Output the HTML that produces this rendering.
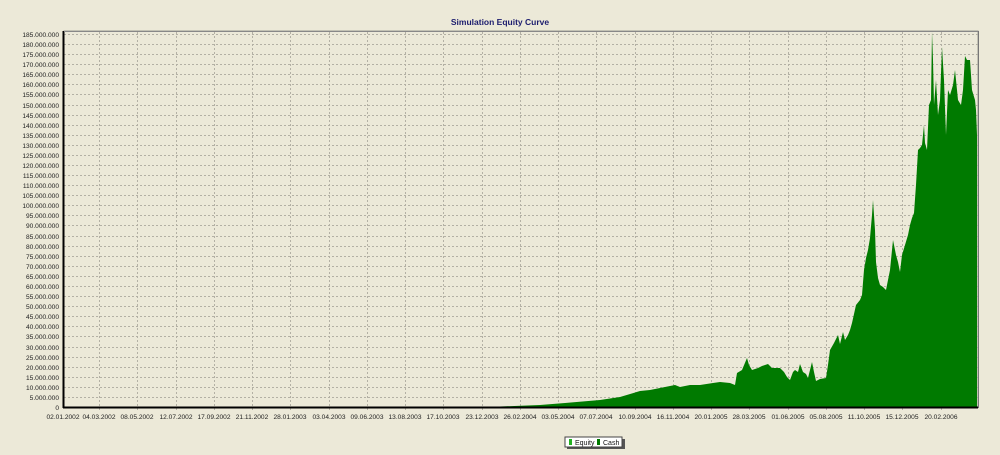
<!DOCTYPE html>
<html><head><meta charset="utf-8"><style>
html,body{margin:0;padding:0;background:#ECE9D8;width:1000px;height:455px;overflow:hidden;font-family:"Liberation Sans",Arial,sans-serif}
</style></head><body>
<svg width="1000" height="455" xmlns="http://www.w3.org/2000/svg" style="position:absolute;left:0;top:0">
<rect width="1000" height="455" fill="#ECE9D8"/>
<text x="500" y="25" text-anchor="middle" font-family="Liberation Sans, Arial, sans-serif" font-size="8.5" font-weight="bold" fill="#1c1c6e">Simulation Equity Curve</text>
<rect x="64" y="31" width="914" height="376" fill="#ECE9D8" stroke="#9a9a90" stroke-width="1"/>
<path stroke="#b3b0a4" stroke-width="1" stroke-dasharray="2,2" fill="none" d="
M64,397.5H978M64,387.5H978M64,377.5H978M64,367.5H978M64,357.5H978M64,347.5H978M64,336.5H978M64,326.5H978M64,316.5H978M64,306.5H978
M64,296.5H978M64,286.5H978M64,276.5H978M64,266.5H978M64,256.5H978M64,246.5H978M64,236.5H978M64,225.5H978M64,215.5H978M64,205.5H978
M64,195.5H978M64,185.5H978M64,175.5H978M64,165.5H978M64,155.5H978M64,145.5H978M64,135.5H978M64,125.5H978M64,115.5H978M64,105.5H978
M64,94.5H978M64,84.5H978M64,74.5H978M64,64.5H978M64,54.5H978M64,44.5H978M64,34.5H978
M99.5,32V410M137.5,32V410M176.5,32V410M214.5,32V410M252.5,32V410M290.5,32V410M329.5,32V410M367.5,32V410M405.5,32V410M443.5,32V410
M482.5,32V410M520.5,32V410M558.5,32V410M596.5,32V410M635.5,32V410M673.5,32V410M711.5,32V410M749.5,32V410M788.5,32V410M826.5,32V410
M864.5,32V410M902.5,32V410M941.5,32V410"/>
<g font-family="Liberation Sans, Arial, sans-serif" font-size="6.6" fill="#222" text-anchor="end">
<text x="59" y="410">0</text><text x="59" y="400">5.000.000</text><text x="59" y="390">10.000.000</text><text x="59" y="380">15.000.000</text><text x="59" y="370">20.000.000</text><text x="59" y="360">25.000.000</text><text x="59" y="350">30.000.000</text><text x="59" y="339">35.000.000</text><text x="59" y="329">40.000.000</text><text x="59" y="319">45.000.000</text><text x="59" y="309">50.000.000</text><text x="59" y="299">55.000.000</text><text x="59" y="289">60.000.000</text><text x="59" y="279">65.000.000</text><text x="59" y="269">70.000.000</text><text x="59" y="259">75.000.000</text><text x="59" y="249">80.000.000</text><text x="59" y="239">85.000.000</text><text x="59" y="228">90.000.000</text><text x="59" y="218">95.000.000</text><text x="59" y="208">100.000.000</text><text x="59" y="198">105.000.000</text><text x="59" y="188">110.000.000</text><text x="59" y="178">115.000.000</text><text x="59" y="168">120.000.000</text><text x="59" y="158">125.000.000</text><text x="59" y="148">130.000.000</text><text x="59" y="138">135.000.000</text><text x="59" y="128">140.000.000</text><text x="59" y="118">145.000.000</text><text x="59" y="108">150.000.000</text><text x="59" y="97">155.000.000</text><text x="59" y="87">160.000.000</text><text x="59" y="77">165.000.000</text><text x="59" y="67">170.000.000</text><text x="59" y="57">175.000.000</text><text x="59" y="47">180.000.000</text><text x="59" y="37">185.000.000</text>
</g>
<g font-family="Liberation Sans, Arial, sans-serif" font-size="6.6" fill="#222" text-anchor="middle">
<text x="63" y="419">02.01.2002</text><text x="99" y="419">04.03.2002</text><text x="137" y="419">08.05.2002</text><text x="176" y="419">12.07.2002</text><text x="214" y="419">17.09.2002</text><text x="252" y="419">21.11.2002</text><text x="290" y="419">28.01.2003</text><text x="329" y="419">03.04.2003</text><text x="367" y="419">09.06.2003</text><text x="405" y="419">13.08.2003</text><text x="443" y="419">17.10.2003</text><text x="482" y="419">23.12.2003</text><text x="520" y="419">26.02.2004</text><text x="558" y="419">03.05.2004</text><text x="596" y="419">07.07.2004</text><text x="635" y="419">10.09.2004</text><text x="673" y="419">16.11.2004</text><text x="711" y="419">20.01.2005</text><text x="749" y="419">28.03.2005</text><text x="788" y="419">01.06.2005</text><text x="826" y="419">05.08.2005</text><text x="864" y="419">11.10.2005</text><text x="902" y="419">15.12.2005</text><text x="941" y="419">20.02.2006</text>
</g>
<path fill="#007A00" d="M500,407 L500,406.5 L540,405 L565,403 L600,400 L620,397 L640,391 L650,390 L660,388 L675,385 L680,387 L690,385 L700,385 L713,383 L720,382 L730,383 L735,385 L737,373 L742,370 L747,358 L749,365 L752,370 L758,368 L762,366 L768,364 L772,368 L780,368 L784,372 L787,377 L790,380 L793,372 L795,370 L798,372 L800,364 L803,372 L806,374 L808,378 L810,370 L812,362 L814,372 L816,381 L820,379 L826,378 L828,365 L830,350 L834,343 L838,335 L840,344 L843,332 L845,340 L848,335 L850,330 L852,323 L856,305 L860,300 L862,295 L864,270 L866,258 L868,250 L870,238 L872,215 L873,200 L875,230 L876,262 L878,278 L880,285 L883,287 L886,290 L888,280 L890,270 L892,250 L893,240 L895,250 L896,255 L898,262 L900,272 L902,255 L905,245 L908,235 L910,225 L912,218 L914,213 L916,185 L918,150 L920,148 L922,145 L924,125 L925,143 L927,150 L929,105 L931,100 L932,32 L933,60 L934,105 L936,80 L938,115 L940,100 L942,47 L944,80 L946,135 L948,90 L950,95 L953,85 L955,70 L958,100 L961,105 L963,90 L965,56 L967,60 L970,60 L972,90 L975,100 L976,110 L977,135 L977,407 Z"/>
<line x1="63.5" y1="31" x2="63.5" y2="408" stroke="#000" stroke-width="2"/>
<line x1="63" y1="407.5" x2="978" y2="407.5" stroke="#000" stroke-width="2"/>
<line x1="978.5" y1="31" x2="978.5" y2="408" stroke="#777" stroke-width="1"/>
<line x1="64" y1="31.5" x2="978" y2="31.5" stroke="#888" stroke-width="1"/>
<rect x="567" y="439" width="58" height="10" fill="#555"/>
<rect x="565" y="437" width="57" height="10" fill="#fff" stroke="#444" stroke-width="1"/>
<rect x="569" y="439" width="3" height="6" fill="#22b022"/>
<text x="575" y="445" font-family="Liberation Sans, Arial, sans-serif" font-size="7" fill="#111">Equity</text>
<rect x="597" y="439" width="3" height="6" fill="#007A00"/>
<text x="603" y="445" font-family="Liberation Sans, Arial, sans-serif" font-size="7" fill="#111">Cash</text>
</svg>
</body></html>
